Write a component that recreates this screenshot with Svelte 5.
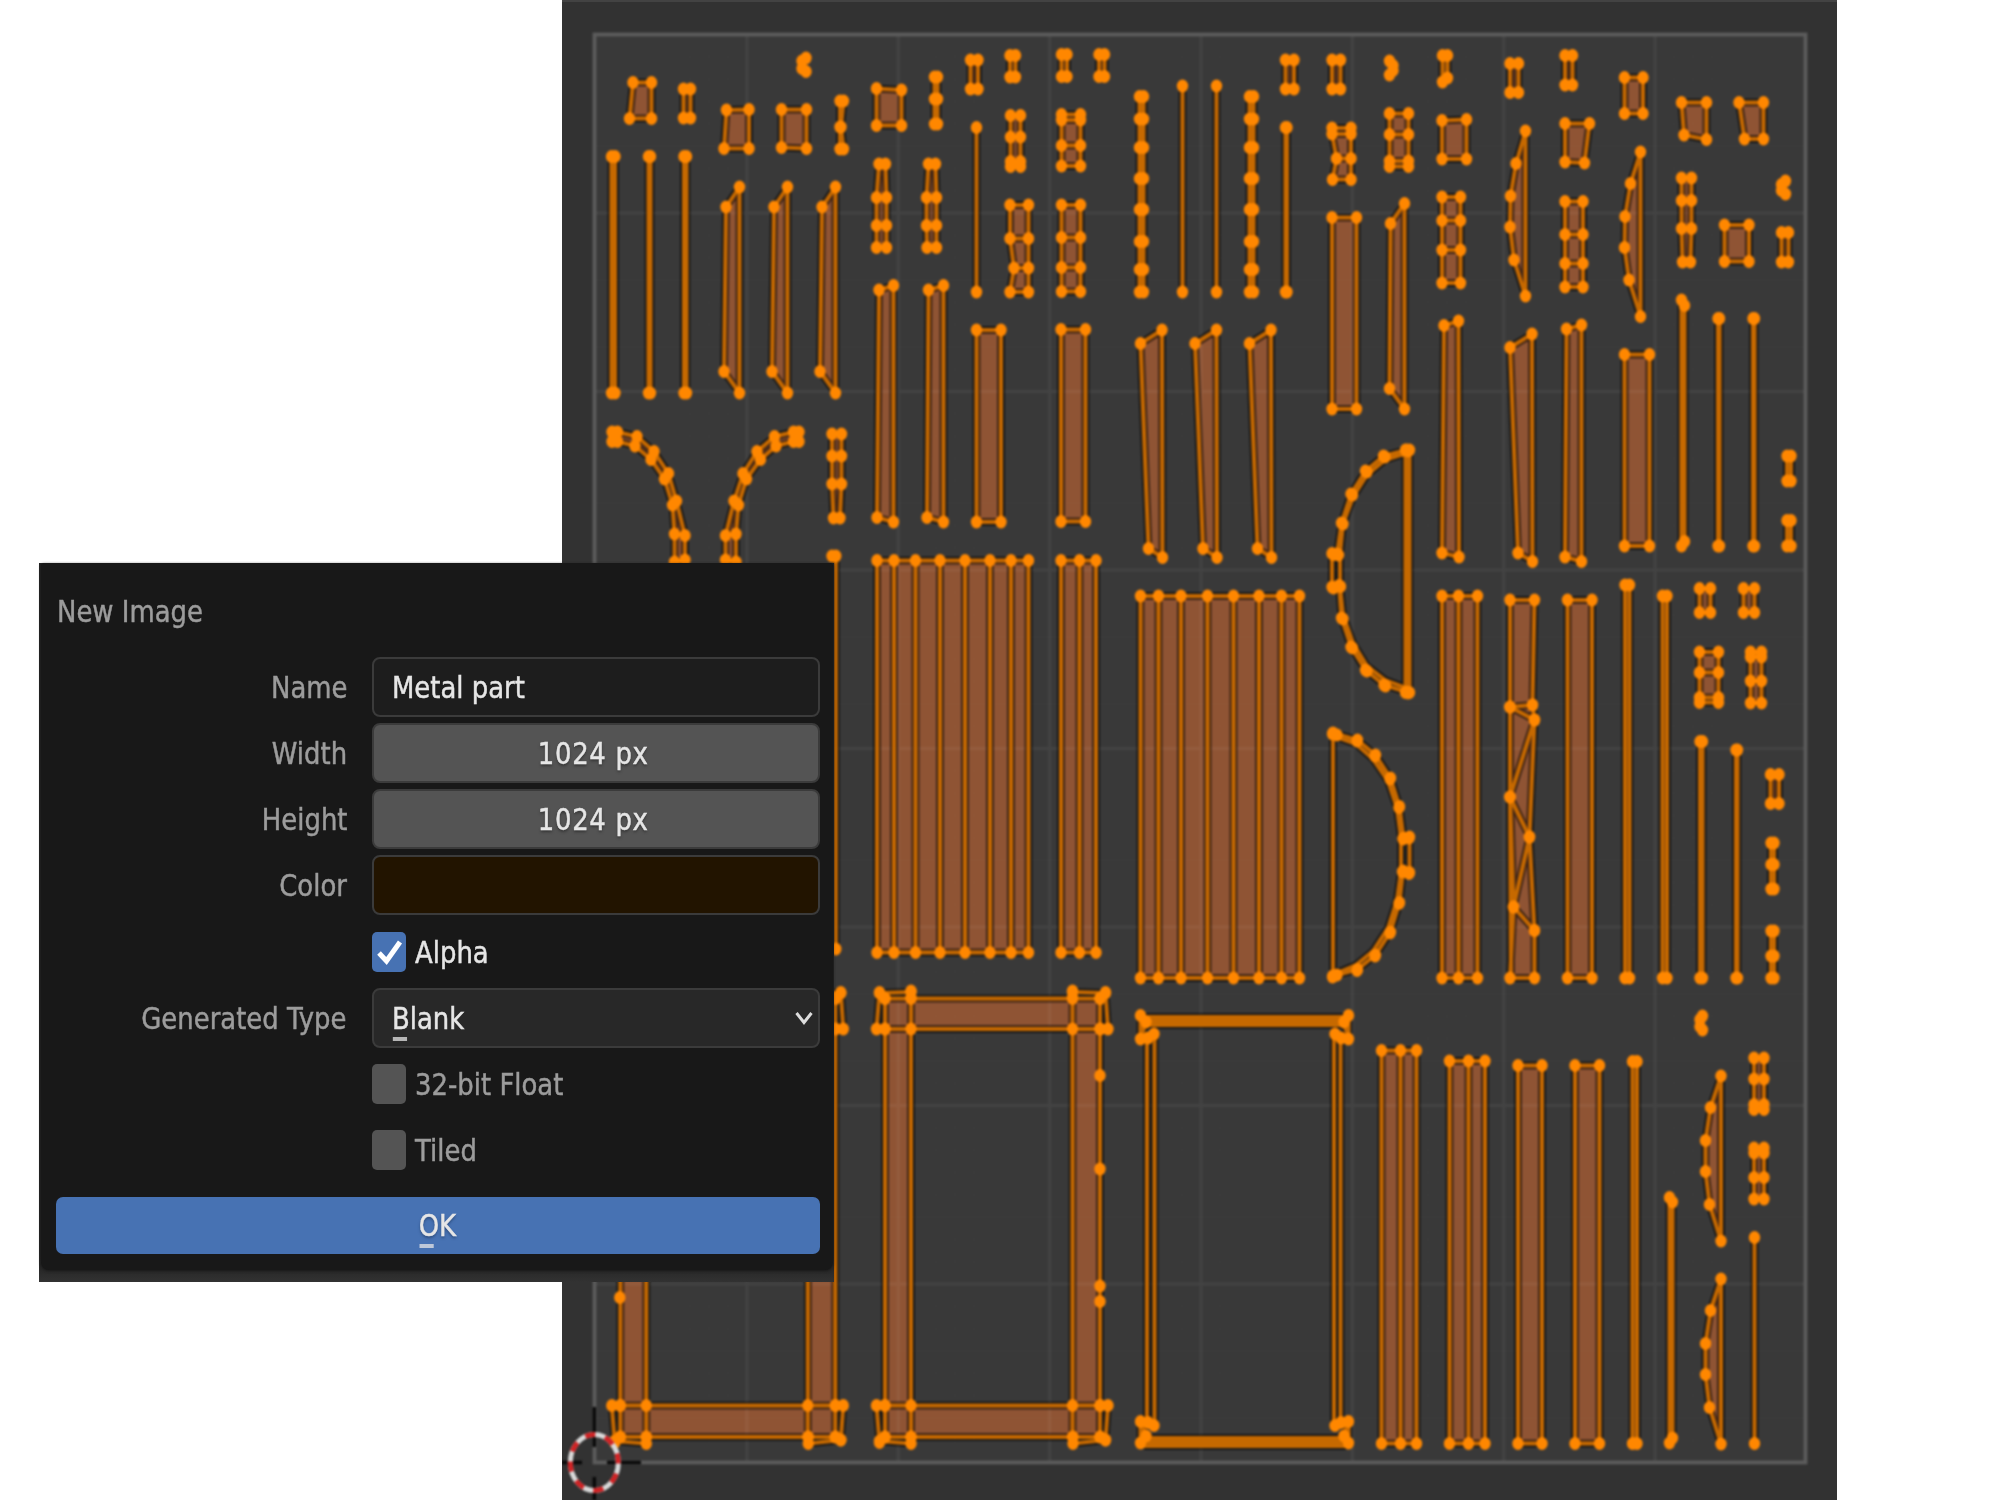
<script>
  // Faces are closed point lists, lines are open ones; every point gets a vertex dot.
  const faces = [];
  const lines = [];
  const dots = [];

  const parse = (s) => s.trim().split(/\s+/).map((p) => p.split(',').map(Number));
  const face = (s) => {
    const pts = parse(s);
    faces.push(pts);
    dots.push(...pts);
  };
  const line = (s) => {
    const pts = parse(s);
    lines.push(pts);
    dots.push(...pts);
  };
  // Rows of [left, right, y], joined into a ladder of quads
  const rungs = (rows) => {
    for (let i = 0; i < rows.length; i++) {
      const [l, r, y] = rows[i];
      dots.push([l, y], [r, y]);
      if (i) {
        const [pl, pr, py] = rows[i - 1];
        faces.push([[pl, py], [pr, py], [r, y], [l, y]]);
      }
    }
  };
  const ladder = (l, r, ...ys) => rungs(ys.map((y) => [l, r, y]));
  const strips = (xs, top, bottom) => {
    xs.forEach((x, i) => {
      dots.push([x, top], [x, bottom]);
      if (i) faces.push([[xs[i - 1], top], [x, top], [x, bottom], [xs[i - 1], bottom]]);
    });
  };

  // Small quads
  face('633,82.5 651.5,82.5 651.5,118.5 629.5,118.5');
  face('726.5,110 749,109.5 749,148.5 724,148.5');
  face('781.5,109.5 806.5,109.5 806.5,148.5 781.5,147.5');
  face('876.5,88.5 901.5,90 901.5,125.5 876.5,125.5');
  face('1442,120.5 1466.5,119.5 1466.5,159 1442,159');
  face('1565,123.5 1589.5,123.5 1584.5,163 1565,162');
  face('1624.5,77.5 1643,77.5 1643,113.5 1624.5,113.5');
  face('1681.5,102.5 1706.5,102.5 1706.5,139.5 1684,135');
  face('1739,102.5 1763.5,102.5 1763.5,139 1744.5,139');
  face('1724.5,225 1749,225 1749,261.5 1724.5,261.5');

  // Small bars
  ladder(683.5, 690.5, 89, 118);
  ladder(970.5, 978, 60, 89);
  ladder(1010, 1015.5, 55.5, 77);
  ladder(1061.5, 1067, 54.5, 76.5);
  ladder(1099, 1104.5, 54.5, 76.5);
  ladder(1285.5, 1294, 60, 89);
  ladder(1332, 1340.5, 60, 89);
  face('1442.5,55.5 1447.5,55.5 1447.5,78 1442.5,82');
  ladder(1510, 1518.5, 63.5, 92.5);
  ladder(1565, 1572.5, 55.5, 85);
  ladder(1781.5, 1788.5, 232.5, 262);
  ladder(1787, 1791, 456, 481);
  ladder(1787, 1791, 520.5, 546);
  ladder(1699.5, 1710.5, 588.5, 612.5);
  ladder(1743.5, 1754.5, 588.5, 612.5);
  ladder(1770.5, 1779, 774.5, 803.5);

  // Bean-shaped slivers
  line('806,58 802,61 802,68.5 806,71.5');
  line('1389.5,61 1393,65.5 1393,70.5 1389.5,75');
  line('1785.5,181 1781.5,184.5 1781.5,190.5 1785.5,194');
  line('1702.5,1016 1700,1019.5 1700,1026.5 1702.5,1030');

  // Ladders
  rungs([[840, 843.5, 101], [840, 841, 127], [840, 843.5, 149]]);
  ladder(934.5, 937.5, 77, 99, 124);
  rungs([[879, 885.5, 164], [876.5, 886.5, 197.5], [876.5, 886.5, 225.5], [876.5, 886.5, 247.5]]);
  rungs([[928.5, 935.5, 164], [926.5, 936.5, 197.5], [926.5, 936.5, 225.5], [927, 936.5, 247.5]]);
  ladder(1010.5, 1020.5, 115.5, 137, 161.5, 166.5);
  ladder(1061.5, 1080.5, 114.5, 120, 145.5, 166);
  rungs([[1010, 1028.5, 205], [1010, 1028.5, 238.5], [1014, 1028.5, 268], [1010, 1028.5, 292]]);
  ladder(1061.5, 1080.5, 205, 237.5, 267.5, 291.5);
  ladder(1139.5, 1143.5, 96.5, 119, 147.5, 178.5, 209.5, 241.5, 269.5, 292);
  ladder(1249.5, 1253.5, 96.5, 119, 147.5, 178.5, 209.5, 241.5, 269.5, 292);
  rungs([[1332, 1351, 128], [1332, 1351, 134], [1336.5, 1351, 158.5], [1332.5, 1351, 179.5]]);
  ladder(1389.5, 1408.5, 113.5, 134.5, 161, 166.5);
  ladder(1442, 1460.5, 197, 220.5, 250, 283);
  ladder(1565, 1583, 201.5, 234.5, 263.5, 287);
  rungs([[1681.5, 1691.5, 178], [1681.5, 1691.5, 200.5], [1681.5, 1691.5, 228.5], [1682.5, 1690.5, 262]]);
  rungs([[832, 841.5, 434], [832, 841.5, 456], [832, 841.5, 484], [833.5, 840, 518]]);
  ladder(1699.5, 1718.5, 652, 672.5, 697.5, 702.5);
  ladder(1750.5, 1761.5, 652, 657, 681, 703);
  ladder(1771, 1774, 843, 864.5, 889);
  ladder(1771, 1774, 931, 956, 978);
  ladder(1754, 1764, 1058, 1079, 1104.5, 1109.5);
  ladder(1754, 1764, 1148, 1153, 1177.5, 1199);

  // Thin rods
  ladder(611.5, 615, 156.5, 393);
  ladder(648.5, 650.5, 156.5, 393);
  ladder(684, 686.5, 156.5, 393);
  line('976.5,127.5 976.5,292');
  line('1182.5,86 1182.5,292');
  line('1216.5,86 1216.5,292');
  ladder(1285.5, 1287, 127.5, 292);
  face('1681.5,300 1684.5,305.5 1684.5,541.5 1681.5,546');
  ladder(1718, 1719.5, 318.5, 546);
  ladder(1753, 1754.5, 318.5, 546);
  ladder(1625, 1629.5, 585, 978);
  ladder(1662.5, 1667, 596, 978);
  ladder(1700, 1702.5, 741.5, 978);
  ladder(1736, 1737.5, 750, 978);
  ladder(1632.5, 1637, 1061.5, 1443.5);
  face('1669.5,1197.5 1672.5,1202 1672.5,1438 1669.5,1443');
  line('1754.5,1237.5 1754.5,1443.5');

  // Slanted blades
  for (const dx of [0, 48, 96]) {
    face([[739.5, 187], [726, 207], [724, 371.5], [739.5, 393]].map(([x, y]) => `${x + dx},${y}`).join(' '));
  }
  face('1404.5,203.5 1390.5,223.5 1389.5,388.5 1404.5,409');
  face('879,290 893.5,285.5 893.5,522 877,517.5');
  face('928.5,290 943.5,285.5 943.5,522 927,517.5');
  for (const dx of [0, 54.5, 109]) {
    face([[1162, 330], [1140.5, 343.5], [1148.5, 548.5], [1162.5, 557.5]].map(([x, y]) => `${x + dx},${y}`).join(' '));
  }
  face('1444,325.5 1458.5,321 1459,557 1442,553');
  face('1510,347.5 1532,334 1532.5,561.5 1518,553');
  face('1566.5,329 1581.5,325 1581.5,561.5 1565,557');

  // Planks
  strips([976.5, 1001], 330, 522);
  strips([1061, 1085.5], 329.5, 521.5);
  strips([1332, 1356.5], 217.5, 409);
  strips([1624.5, 1649.5], 354.5, 546);
  strips([877, 894, 915.5, 940, 965, 990, 1011, 1028.5], 560.5, 952.5);
  strips([1061, 1079.5, 1096], 560.5, 952.5);
  strips([1140.5, 1158.5, 1181, 1207.5, 1233.5, 1259, 1281.5, 1299.5], 596, 978);
  strips([1442, 1458.5, 1477.5], 596, 978);
  strips([1567.5, 1592], 600, 978);
  strips([1381.5, 1400.5, 1416.5], 1050.5, 1443.5);
  strips([1449.5, 1468.5, 1485], 1061, 1443.5);
  strips([1518, 1542], 1065.5, 1443.5);
  strips([1575, 1599.5], 1065.5, 1443.5);

  // Triangulated plank
  face('1510,600 1534.5,600 1532.5,705 1510,707');
  face('1510,707 1532.5,705 1534.5,720');
  face('1510,707 1534.5,720 1510,797');
  face('1534.5,720 1529.5,837 1510,797');
  face('1510,797 1529.5,837 1513.5,907');
  face('1529.5,837 1534.5,930.5 1513.5,907');
  face('1513.5,907 1534.5,930.5 1534.5,978 1510,978');
  lines.push([[1510, 797], [1511, 978]]);

  // Bows
  face('1525.5,131 1516,163.5 1510.5,196 1510,227 1514,260 1525.5,296');
  face('1640.5,152 1630.5,183.5 1625,216.5 1624.5,247.5 1629,280 1640.5,316.5');
  for (const dy of [0, 203]) {
    face([[1721, 1076], [1710.5, 1107.5], [1705.5, 1140.5], [1705.5, 1171.5], [1709.5, 1204.5], [1721, 1241]]
      .map(([x, y]) => `${x},${y + dy}`).join(' '));
  }

  // Curved double-edged bands
  const band = (a, b) => {
    const p = parse(a);
    const q = parse(b);
    dots.push(...p, ...q);
    for (let i = 1; i < p.length; i++) faces.push([p[i - 1], p[i], q[i], q[i - 1]]);
  };
  band('612,432 617.5,432 637,436.5 654,451.5 668.5,473.5 676.5,501 685,535.5 685,560',
       '612,441.5 617.5,441.5 635,446 651,459.5 664.5,479 672.5,505 674.5,534 674.5,562');
  band('799,432 793.5,432 774.5,436.5 757,451.5 743,473.5 734,501 725.5,535.5 725.5,560',
       '799,441.5 793.5,441.5 776,446 760.5,459.5 746.5,479 738.5,505 736,534 736,562');
  // Thin rings: the inner vertices nearly coincide with the outer ones
  const ring = (outer, inner, dx) => {
    const pts = parse(outer);
    lines.push(pts, parse(inner));
    for (const [x, y] of pts) dots.push([x, y], [x + dx, y + 1]);
  };
  ring('1406.5,450 1383.5,456 1365.5,471 1351,494 1341.5,523 1337,554 1332,553.5 1332,587 1339,585.5 1341.5,618 1351,647 1365.5,670 1384,685 1406.5,692',
       '1406.5,453 1385,460 1367,475 1353,497 1343,524 1340,554 1340,586 1343,615 1353,643 1367,666 1385,680 1406.5,688', 1.5);
  ladder(1405.5, 1409.5, 450, 692.5);
  ring('1333,733 1357.5,740 1375.5,755 1390.5,778 1399.5,806.5 1403.5,838 1409.5,837 1409.5,872.5 1403,871 1399.5,902.5 1390.5,932 1375.5,955 1357.5,969.5 1333,976',
       '1337,737 1356,744 1373,759 1388,781 1397,808 1401,838 1401,871 1397,900 1388,928 1373,951 1356,965 1337,973', -0.5);
  line('1333,733.5 1333,976');
  dots.push([1337, 735], [1337, 975]);

  // Frames with wide members
  const frame = (dx) => {
    const X = [885, 911, 1072.5, 1100].map((x) => x + dx);
    const Y = [998.5, 1029, 1405.5, 1437];
    for (let r = 0; r < 3; r++)
      for (let c = 0; c < 3; c++)
        if (r !== 1 || c !== 1)
          faces.push([[X[c], Y[r]], [X[c + 1], Y[r]], [X[c + 1], Y[r + 1]], [X[c], Y[r + 1]]]);
    for (const x of X) for (const y of Y) dots.push([x, y]);
    const at = (pts) => pts.map(([x, y]) => [x + dx, y]);
    const rims = [
      at([[885, 998.5], [879.5, 992.5], [876.5, 1029], [885, 1029]]),
      at([[879.5, 993], [911, 992]]),
      at([[911, 998], [911, 991]]),
      at([[1072.5, 998], [1072.5, 991]]),
      at([[1072.5, 992], [1105.5, 993]]),
      at([[1100, 998.5], [1105.5, 992.5], [1108, 1029], [1100, 1029]]),
      at([[885, 1437], [879.5, 1442.5], [876.5, 1405.5], [885, 1405.5]]),
      at([[879.5, 1441], [911, 1443.5], [911, 1437]]),
      at([[1100, 1437], [1105.5, 1440], [1108, 1405.5], [1100, 1405.5]]),
      at([[1105.5, 1440], [1073, 1443.5], [1073, 1437]]),
    ];
    for (const r of rims) {
      lines.push(r);
      dots.push(...r);
    }
  };
  frame(0);
  frame(-264.7);
  dots.push([1100, 1075.5], [1100, 1169], [1100, 1286], [1100, 1301.5], [619.8, 1297.5]);
  line('835.8,556 835.8,949');
  dots.push([832, 556]);

  // Frame with narrow members; the bars' edges sit close enough to merge
  for (const y of [1017, 1020, 1022.5, 1025, 1438, 1441, 1443.5, 1446]) lines.push([[1144, y], [1346, y]]);
  for (const x of [1147, 1154.5, 1334, 1340.5]) lines.push([[x, 1036], [x, 1424]]);
  for (const [a, b, c, d] of [[1140.5, 1146, 1154, 1148], [1348.5, 1344, 1335, 1341]]) {
    line(`${a},1015.5 ${b},1022 ${a},1039 ${d},1038 ${c},1034`);
    line(`${c},1425.5 ${d},1422.5 ${a},1421.5 ${b},1436 ${a},1443`);
    lines.push([[a, 1016], [a, 1039]], [[a, 1421], [a, 1443]]);
  }

  const closed = (pts) => 'M' + pts.map((p) => p.join(' ')).join('L') + 'Z';
  const open = (pts) => 'M' + pts.map((p) => p.join(' ')).join('L');
  const facePath = faces.map(closed).join('');
  const edgePath = facePath + lines.map(open).join('');

  // UV tile bounds and grid
  const L = 594.5, T = 34.5, R = 1805.5, B = 1462.5;
  const gridLines = (n, skip) => {
    let d = '';
    for (let i = 1; i < n; i++) {
      if (skip && i % skip === 0) continue;
      const x = L + ((R - L) * i) / n;
      const y = T + ((B - T) * i) / n;
      d += `M${x + 1} ${T}V${B}M${L} ${y}H${R}`;
    }
    return d;
  };
  const major = gridLines(8, 0);
  const minor = gridLines(64, 8);
</script>

<main class="stage">
  <section class="editor">
    <svg viewBox="562 0 1275 1500" width="1275" height="1500">
      <rect x="562" y="0" width="1275" height="2" fill="#434343" />
      <g class="soft">
        <rect x={L} y={T} width={R - L} height={B - T} fill="#393939" />
        <path d={facePath} class="fill" />
        <path d={minor} class="minor" />
        <path d={major} class="major" />
        <rect x={L} y={T} width={R - L} height={B - T} class="bounds" />
        <path d={edgePath} class="shade" />
        <path d={edgePath} class="edge" />
        {#each dots as [x, y]}
          <ellipse cx={x} cy={y} rx="5.7" ry="6.5" fill="#ff8700" />
        {/each}
        <g class="cursor">
          <path d="M594.3 1407V1447M594.3 1477V1500M562 1462.5H582M607 1462.5H641" />
          <ellipse cx="594.3" cy="1462.5" rx="24" ry="28" stroke="#d9d9d9" />
          <ellipse cx="594.3" cy="1462.5" rx="24" ry="28" stroke="#d02224" pathLength="16" stroke-dasharray="1 1" stroke-dashoffset="0.9" />
        </g>
      </g>
    </svg>
  </section>

  <div class="dialog">
    <div class="body">
      <h1><span class="t left">New Image</span></h1>
      <div class="row">
        <span class="label"><span class="t right">Name</span></span>
        <div class="field text"><span class="t left">Metal part</span></div>
      </div>
      <div class="row">
        <span class="label"><span class="t right">Width</span></span>
        <div class="field number"><span class="t">1024 px</span></div>
      </div>
      <div class="row">
        <span class="label"><span class="t right">Height</span></span>
        <div class="field number"><span class="t">1024 px</span></div>
      </div>
      <div class="row">
        <span class="label"><span class="t right">Color</span></span>
        <div class="field color"></div>
      </div>
      <div class="row">
        <span class="label"></span>
        <div class="check on">
          <i><svg viewBox="0 0 34 40" width="34" height="40"><path d="M7 21L14.5 29L28 10" /></svg></i>
          <span class="t left">Alpha</span>
        </div>
      </div>
      <div class="row">
        <span class="label"><span class="t right">Generated Type</span></span>
        <div class="field menu">
          <span class="t left"><span class="key">B</span>lank</span>
          <svg viewBox="0 0 20 16" width="20" height="16"><path d="M2.5 3L10 12.5L17.5 3" /></svg>
        </div>
      </div>
      <div class="row">
        <span class="label"></span>
        <div class="check"><i></i><span class="t left">32-bit Float</span></div>
      </div>
      <div class="row">
        <span class="label"></span>
        <div class="check"><i></i><span class="t left">Tiled</span></div>
      </div>
      <div class="ok"><span class="t"><span class="key">O</span>K</span></div>
    </div>
  </div>
</main>

<style>
  :global(body) { margin: 0; background: #fff; }
  .stage {
    position: relative;
    width: 2000px;
    height: 1500px;
    overflow: hidden;
    background: #fff;
    font-family: "DejaVu Sans", sans-serif;
  }
  .editor { width: 1275px; height: 1500px; margin-left: 562px; background: #323232; overflow: hidden; }
  .editor svg { display: block; }
  .soft { filter: blur(1px); }
  .fill { fill: #8f5434; }
  .minor { stroke: #fff; stroke-opacity: 0.008; stroke-width: 2; fill: none; }
  .major { stroke: #fff; stroke-opacity: 0.05; stroke-width: 3.2; fill: none; }
  .bounds { stroke: #5c5c5c; stroke-width: 3.8; fill: none; }
  .shade { stroke: #000; stroke-opacity: 0.55; stroke-width: 8; fill: none; stroke-linejoin: round; }
  .edge { stroke: #c66900; stroke-width: 4; fill: none; stroke-linejoin: round; }
  .cursor path { stroke: #080808; stroke-width: 3.4; fill: none; }
  .cursor ellipse { fill: none; stroke-width: 5; }

  .dialog {
    position: absolute;
    left: 39px;
    top: 563px;
    width: 795px;
    height: 719px;
    background: linear-gradient(#222 0, #222 690px, #272727 705px, #323232 100%);
  }
  .body {
    box-sizing: border-box;
    margin: 0 1px 0 2px;
    height: 707px;
    padding: 28px 13px 0 15px;
    background: #181818;
    border-radius: 3px 3px 8px 8px;
    color: #9c9c9c;
    font-size: 31px;
    line-height: 40px;
    box-shadow: 0 1px 3px #181818;
  }
  h1 { margin: 0 0 26px 1px; height: 40px; font-size: 31px; font-weight: 400; color: #9c9c9c; }
  .t {
    display: inline-block;
    white-space: nowrap;
    transform: scaleX(0.836);
    transform-origin: center;
    filter: blur(0.7px);
    -webkit-text-stroke: 0.5px currentColor;
  }
  .t.left { transform-origin: left; }
  .t.right { transform-origin: right; }
  .row { display: flex; align-items: center; height: 59.5px; margin-bottom: 6.7px; }
  .label { width: 291px; margin-right: 25px; text-align: right; flex: none; }
  .field {
    box-sizing: border-box;
    flex: 1;
    height: 60px;
    border: 2px solid #3b3b3b;
    border-radius: 8px;
    display: flex;
    align-items: center;
    color: #e6e6e6;
  }
  .text { background: #1d1d1d; padding-left: 18px; }
  .number {
    background: #545454;
    justify-content: center;
    padding-right: 6px;
    letter-spacing: 0.8px;
    text-shadow: 0 2px 3px #333;
  }
  .color { background: #221400; }
  .menu { background: #282828; justify-content: space-between; padding: 0 4px 0 18px; }
  .menu svg path { fill: none; stroke: #ddd; stroke-width: 3; }
  .check { display: flex; align-items: center; gap: 9px; }
  .check i { width: 34px; height: 40px; border-radius: 5px; background: #545454; flex: none; }
  .check.on { color: #e6e6e6; }
  .check.on i { background: #4772b3; }
  .check svg { display: block; fill: none; stroke: #fff; stroke-width: 5; }
  .ok {
    display: flex;
    align-items: center;
    justify-content: center;
    height: 57px;
    margin-top: 17px;
    padding-right: 2px;
    border-radius: 7px;
    background: #4772b3;
    color: #e6e6e6;
    text-shadow: 0 2px 3px #2c4a7a;
  }
  .key { position: relative; }
  .key::after {
    content: "";
    position: absolute;
    left: 1px;
    bottom: -5px;
    width: 17px;
    height: 4px;
    background: currentColor;
    opacity: 0.75;
  }
</style>
